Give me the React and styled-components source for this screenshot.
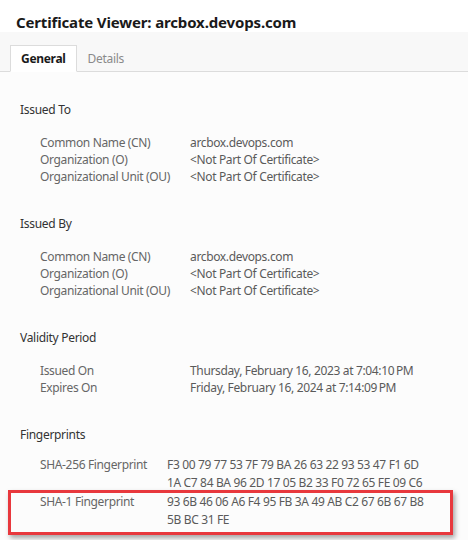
import React from "react";
import styled, { createGlobalStyle } from "styled-components";

const sections = [
  {
    title: "Issued To",
    labelWidth: 150,
    rows: [
      ["Common Name (CN)", "arcbox.devops.com"],
      ["Organization (O)", "<Not Part Of Certificate>"],
      ["Organizational Unit (OU)", "<Not Part Of Certificate>"],
    ],
  },
  {
    title: "Issued By",
    labelWidth: 150,
    rows: [
      ["Common Name (CN)", "arcbox.devops.com"],
      ["Organization (O)", "<Not Part Of Certificate>"],
      ["Organizational Unit (OU)", "<Not Part Of Certificate>"],
    ],
  },
  {
    title: "Validity Period",
    labelWidth: 150,
    rows: [
      ["Issued On", "Thursday, February 16, 2023 at 7:04:10\u202FPM"],
      ["Expires On", "Friday, February 16, 2024 at 7:14:09\u202FPM"],
    ],
  },
];

const fingerprints = [
  {
    label: "SHA-256 Fingerprint",
    lines: [
      "F3 00 79 77 53 7F 79 BA 26 63 22 93 53 47 F1 6D",
      "1A C7 84 BA 96 2D 17 05 B2 33 F0 72 65 FE 09 C6",
    ],
  },
  {
    label: "SHA-1 Fingerprint",
    lines: ["93 6B 46 06 A6 F4 95 FB 3A 49 AB C2 67 6B 67 B8", "5B BC 31 FE"],
    highlight: true,
  },
];

const App = () => (
  <>
    <GlobalStyle />
    <Window>
      <Title>Certificate Viewer: arcbox.devops.com</Title>
      <TabBar>
        <Tab active>General</Tab>
        <Tab>Details</Tab>
      </TabBar>
      <Content>
        {sections.map((section) => (
          <Section key={section.title}>
            <Heading>{section.title}</Heading>
            <Rows>
              {section.rows.map(([label, value]) => (
                <Row key={label} labelWidth={section.labelWidth}>
                  <Label>{label}</Label>
                  <Value>{value}</Value>
                </Row>
              ))}
            </Rows>
          </Section>
        ))}
        <Section tight>
          <Heading>Fingerprints</Heading>
          <Rows>
            {fingerprints.map((fp) => (
              <FingerprintRow key={fp.label} highlight={fp.highlight}>
                <Row labelWidth={127} lineHeight={18}>
                  <Label>{fp.label}</Label>
                  <Value>
                    {fp.lines.map((line) => (
                      <HexLine key={line}>{line}</HexLine>
                    ))}
                  </Value>
                </Row>
              </FingerprintRow>
            ))}
          </Rows>
        </Section>
      </Content>
    </Window>
  </>
);

const GlobalStyle = createGlobalStyle`
  html, body {
    margin: 0;
    padding: 0;
    background: #ffffff;
  }
  body {
    font-family: "Noto Sans", "Open Sans", sans-serif;
  }
`;

const Window = styled.div`
  width: 468px;
  height: 540px;
  overflow: hidden;
  display: flex;
  flex-direction: column;
  background: #fcfcfc;
`;

const Title = styled.div`
  flex-shrink: 0;
  height: 32px;
  background: #ffffff;
  padding: 13px 0 0 16px;
  box-sizing: border-box;
  font-size: 15px;
  font-weight: 700;
  letter-spacing: -0.15px;
  color: #1a1a1a;
  line-height: 18px;
`;

const TabBar = styled.div`
  flex-shrink: 0;
  display: flex;
  align-items: flex-end;
  height: 40px;
  box-sizing: border-box;
  padding-left: 10px;
  background: #f8f8f8;
  border-bottom: 1px solid #dcdcdc;
`;

const Tab = styled.div`
  height: 27px;
  box-sizing: border-box;
  padding: 0 10px;
  margin-bottom: -1px;
  display: flex;
  align-items: center;
  font-size: 12px;
  letter-spacing: -0.3px;
  font-weight: ${({ active }) => (active ? 700 : 400)};
  color: ${({ active }) => (active ? "#1a1a1a" : "#8a8a8a")};
  background: ${({ active }) => (active ? "#ffffff" : "transparent")};
  border: 1px solid ${({ active }) => (active ? "#dcdcdc" : "transparent")};
  border-bottom-color: ${({ active }) => (active ? "#ffffff" : "transparent")};
`;

const Content = styled.div`
  flex-shrink: 0;
  display: flex;
  flex-direction: column;
  gap: 30px;
  padding: 29px 0 0 0;
`;

const Section = styled.div`
  display: flex;
  flex-direction: column;
  gap: ${({ tight }) => (tight ? "13px" : "16px")};
`;

const Heading = styled.div`
  padding-left: 20px;
  font-size: 12px;
  letter-spacing: -0.3px;
  color: #333333;
  line-height: 17px;
`;

const Rows = styled.div`
  display: flex;
  flex-direction: column;
`;

const Row = styled.div`
  display: grid;
  grid-template-columns: ${({ labelWidth }) => labelWidth}px 1fr;
  padding-left: 40px;
  font-size: 12px;
  letter-spacing: -0.35px;
  line-height: ${({ lineHeight }) => lineHeight || 17}px;
`;

const Label = styled.div`
  color: #666666;
`;

const Value = styled.div`
  color: #5a5a5a;
`;

const HexLine = styled.div`
  white-space: nowrap;
`;

const FingerprintRow = styled.div`
  margin: ${({ highlight }) => (highlight ? "-2px 15px 0 8px" : "0")};
  padding: ${({ highlight }) => (highlight ? "0 0 3px 0" : "0")};
  border: ${({ highlight }) => (highlight ? "3px solid #e8383d" : "none")};
  box-shadow: ${({ highlight }) =>
    highlight ? "2px 3px 5px rgba(0, 0, 0, 0.35)" : "none"};

  ${Row} {
    padding-left: ${({ highlight }) => (highlight ? "29px" : "40px")};
  }
`;

export default App;
